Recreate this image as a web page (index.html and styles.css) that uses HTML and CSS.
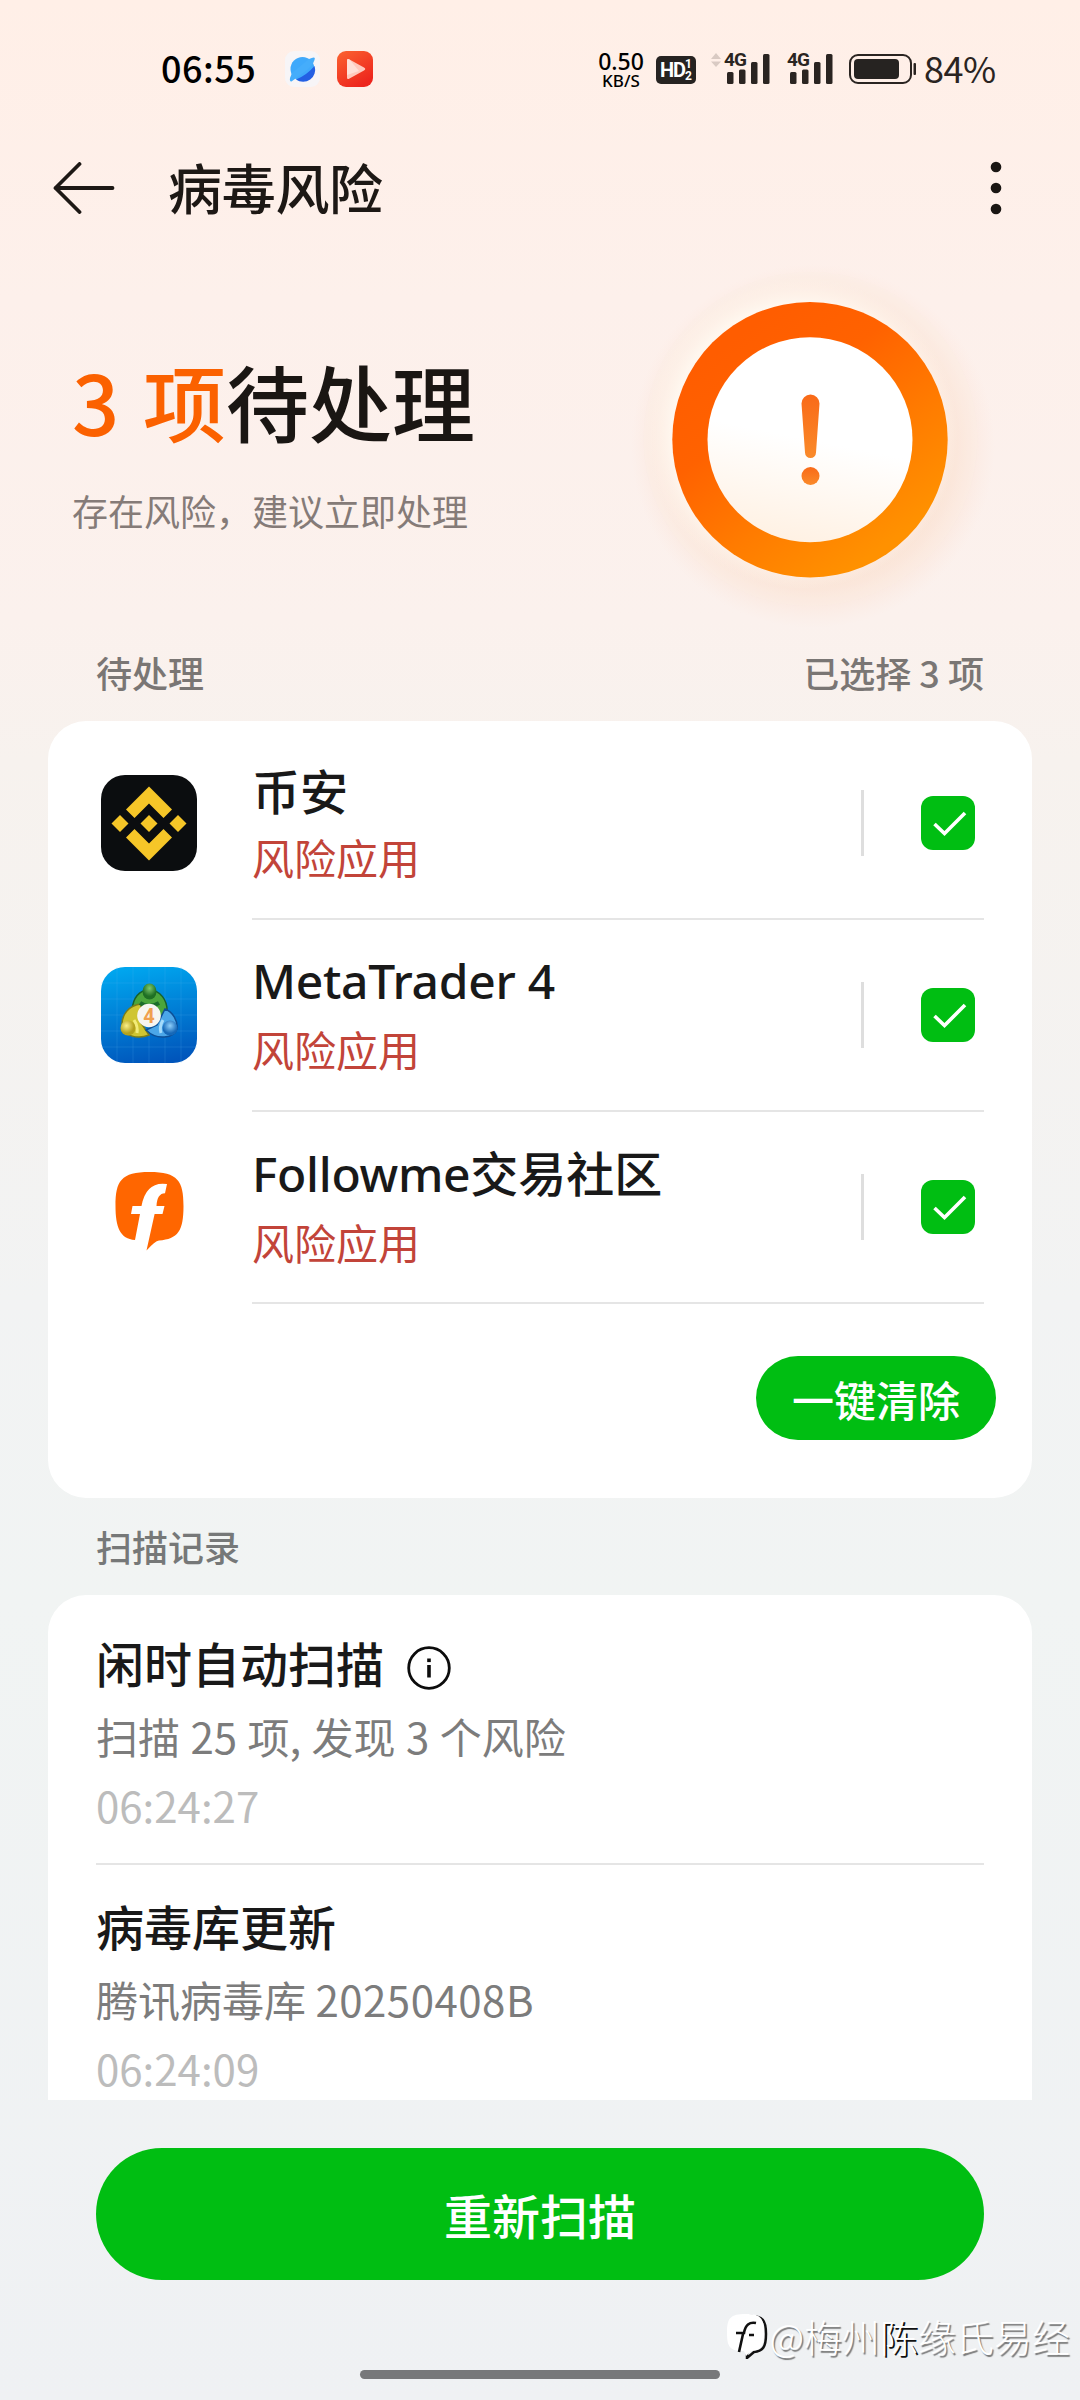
FILE: index.html
```html
<!DOCTYPE html>
<html lang="zh-CN">
<head>
  <meta charset="UTF-8">
  <meta name="viewport" content="width=device-width, initial-scale=1.0">
  <title>病毒风险</title>
  <link rel="stylesheet" href="styles.css">
</head>
<body>

  <div class="screen">

    <!-- 状态栏 -->
    <div class="status-bar">
      <span class="clock">06:55</span>
      <svg class="tray-icon tray-browser" viewBox="0 0 36 36">
        <rect width="35" height="36" rx="9" fill="#f7f5f7"/>
        <circle cx="17.500" cy="18" r="12" fill="#3fa9fb"/>
        <path d="M29.500 15A12 12 0 0 1 11 28.500Q22 24 29.500 15z" fill="#2360e4"/>
        <path d="M24 8Q29 5.500 29.800 7Q30 9 27 14L22 19L6.500 30.500Q4.500 31 5 27L7 22z" fill="#45adfb"/>
      </svg>
      <svg class="tray-icon tray-video" viewBox="0 0 36 36">
        <defs>
          <linearGradient id="videoBg" x1="0" y1="0" x2=".6" y2="1">
            <stop offset="0" stop-color="#fb6330"/>
            <stop offset="1" stop-color="#ed251d"/>
          </linearGradient>
        </defs>
        <rect width="36" height="36" rx="9" fill="url(#videoBg)"/>
        <path d="M10 9.500Q10 7 12.500 8.500L27 16.500Q29.500 18 27 19.500L12.500 27.500Q10 29 10 26.500z" fill="#ffc9bd"/>
        <path d="M10 9.500Q10 7 12.500 8.500L22 20L10 24z" fill="#ffe0d8"/>
      </svg>

      <div class="net-speed">
        <span class="speed-value">0.50</span>
        <span class="speed-unit">KB/S</span>
      </div>
      <div class="hd-badge">
        <span class="hd-text">HD</span>
        <span class="hd-sim"><i>1</i><i>2</i></span>
      </div>
      <svg class="updown" viewBox="0 0 10 14">
        <path d="M5 0L10 6H0z M5 14L10 8.500H0z" fill="#d9cac3"/>
      </svg>
      <div class="signal">
        <span class="signal-type">4G</span>
        <svg class="signal-bars" viewBox="0 0 43 30">
          <rect x="0" y="18" width="6.500" height="12" rx="1.500"/>
          <rect x="12" y="15.500" width="6.500" height="14.500" rx="1.500"/>
          <rect x="24" y="8" width="6.500" height="22" rx="1.500"/>
          <rect x="36" y="0" width="6.500" height="30" rx="1.500"/>
        </svg>
      </div>
      <div class="signal signal-second">
        <span class="signal-type">4G</span>
        <svg class="signal-bars" viewBox="0 0 43 30">
          <rect x="0" y="18" width="6.500" height="12" rx="1.500"/>
          <rect x="12" y="15.500" width="6.500" height="14.500" rx="1.500"/>
          <rect x="24" y="8" width="6.500" height="22" rx="1.500"/>
          <rect x="36" y="0" width="6.500" height="30" rx="1.500"/>
        </svg>
      </div>
      <svg class="battery" viewBox="0 0 68 30">
        <rect x="1" y="1" width="61" height="28" rx="8" fill="none" stroke="#2a2421" stroke-width="2"/>
        <rect x="5" y="5" width="45" height="20" rx="4" fill="#262321"/>
        <rect x="64.500" y="9" width="2.500" height="12" rx="1" fill="#2a2421"/>
      </svg>
      <span class="battery-text">84%</span>
    </div>

    <!-- 标题栏 -->
    <header class="title-bar">
      <svg class="back" viewBox="0 0 62 52">
        <path d="M26.500 2L2.500 26L26.500 50M2.500 26H59.500" fill="none" stroke="#1d1815" stroke-width="3.800" stroke-linecap="round" stroke-linejoin="round"/>
      </svg>
      <h1>病毒风险</h1>
      <svg class="more" viewBox="0 0 12 54">
        <circle cx="6" cy="6" r="5.300"/>
        <circle cx="6" cy="27" r="5.300"/>
        <circle cx="6" cy="48" r="5.300"/>
      </svg>
    </header>

    <!-- 风险概览 -->
    <section class="hero">
      <div class="hero-text">
        <h2><em>3 项</em>待处理</h2>
        <p>存在风险，建议立即处理</p>
      </div>
      <svg class="hero-badge" viewBox="0 0 400 400">
        <defs>
          <radialGradient id="halo">
            <stop offset=".6" stop-color="#f9c9a9" stop-opacity=".55"/>
            <stop offset=".78" stop-color="#fad0b8" stop-opacity=".4"/>
            <stop offset="1" stop-color="#fddccb" stop-opacity="0"/>
          </radialGradient>
          <radialGradient id="glow">
            <stop offset=".84" stop-color="#fff8f0" stop-opacity=".9"/>
            <stop offset="1" stop-color="#fff4ec" stop-opacity="0"/>
          </radialGradient>
          <linearGradient id="ring" x1=".2" y1=".15" x2=".75" y2=".9">
            <stop offset="0" stop-color="#ff5d00"/>
            <stop offset=".3" stop-color="#ff6200"/>
            <stop offset=".65" stop-color="#ff7b00"/>
            <stop offset="1" stop-color="#ff9100"/>
          </linearGradient>
          <linearGradient id="face" x1=".6" y1="0" x2=".4" y2="1">
            <stop offset=".5" stop-color="#ffffff"/>
            <stop offset="1" stop-color="#fff1e3"/>
          </linearGradient>
          <linearGradient id="mark" x1="0" y1="0" x2="0" y2="1">
            <stop offset="0" stop-color="#f96a18"/>
            <stop offset="1" stop-color="#fa8a2a"/>
          </linearGradient>
        </defs>
        <circle cx="193" cy="206" r="182" fill="url(#halo)"/>
        <circle cx="190.500" cy="199" r="167" fill="#fdeee4" fill-opacity=".25"/>
        <circle cx="182" cy="193" r="156" fill="url(#glow)"/>
        <circle cx="190" cy="199.700" r="137.700" fill="url(#ring)"/>
        <circle cx="190" cy="199.700" r="102.500" fill="url(#face)"/>
        <g fill="url(#mark)">
          <path d="M181.500 163.500a9 9 0 0 1 18 0L196 212.500a5.500 5.500 0 0 1-11 0z"/>
          <circle cx="190.500" cy="236" r="9"/>
        </g>
      </svg>
    </section>

    <!-- 待处理列表 -->
    <div class="section-head pending-head">
      <span>待处理</span>
      <span>已选择 3 项</span>
    </div>
    <section class="card pending">
      <div class="app">
        <svg class="app-icon" viewBox="0 0 96 96">
          <rect width="96" height="96" rx="24" fill="#0b0d0f"/>
          <g fill="#f6c628">
            <path d="M48 11.500L71 34.500L62.500 43L48 28.500L33.500 43L25 34.500z"/>
            <path d="M48 85.500L71 62.500L62.500 54L48 68.500L33.500 54L25 62.500z"/>
            <path d="M48 40L56.500 48.500L48 57L39.500 48.500z"/>
            <path d="M19 40L27.500 48.500L19 57L10.500 48.500z"/>
            <path d="M77 40L85.500 48.500L77 57L68.500 48.500z"/>
          </g>
        </svg>
        <div class="app-body">
          <div class="app-text">
            <div class="app-name">币安</div>
            <div class="app-risk">风险应用</div>
          </div>
          <span class="sep"></span>
          <svg class="check" viewBox="0 0 54 54">
            <rect width="54" height="54" rx="12" fill="#00be12"/>
            <path d="M13.500 28L23.500 37.500L44 17" fill="none" stroke="#fff" stroke-width="3.600"/>
          </svg>
        </div>
      </div>

      <div class="app">
        <svg class="app-icon" viewBox="0 0 96 96">
          <defs>
            <linearGradient id="mtBg" x1=".4" y1="0" x2=".6" y2="1">
              <stop offset="0" stop-color="#00a5ee"/>
              <stop offset="1" stop-color="#0055bb"/>
            </linearGradient>
            <linearGradient id="mtGreen" x1="0" y1="0" x2="0" y2="1">
              <stop offset="0" stop-color="#2f8a2c"/>
              <stop offset="1" stop-color="#5fb84a"/>
            </linearGradient>
            <radialGradient id="ballGreen" cx=".5" cy=".3">
              <stop offset="0" stop-color="#7fc96d"/>
              <stop offset="1" stop-color="#1f7024"/>
            </radialGradient>
            <radialGradient id="ballYellow" cx=".4" cy=".35">
              <stop offset="0" stop-color="#fbf08a"/>
              <stop offset="1" stop-color="#b3a11c"/>
            </radialGradient>
            <radialGradient id="ballBlue" cx=".5" cy=".35">
              <stop offset="0" stop-color="#8fd0fb"/>
              <stop offset="1" stop-color="#1668b8"/>
            </radialGradient>
          </defs>
          <rect width="96" height="96" rx="24" fill="url(#mtBg)"/>
          <path d="M16 0V96M32 0V96M48 0V96M64 0V96M80 0V96M0 16H96M0 32H96M0 48H96M0 64H96M0 80H96" stroke="#5cc0f5" stroke-opacity=".22" stroke-width=".8"/>
          <path d="M31 43C32 31 38 23 48 23C59 23 67 33 66 46L61 56L35 50z" fill="#4ba63c" stroke="#17602c" stroke-width="1.500"/>
          <path d="M40 37C28 38 20 48 21 60C22 68 36 73 48 68L40 56z" fill="#cfc532" stroke="#7c7d18" stroke-width="1.500"/>
          <path d="M64 42C72 45 77 54 76 62C73 71 56 74 45 63L56 58z" fill="#4ba6e8" stroke="#0d4f96" stroke-width="1.500"/>
          <path d="M39 36Q48 42 58 36" fill="none" stroke="#1b6d2b" stroke-width="4"/>
          <path d="M33 53Q37 59 36 66" fill="none" stroke="#f2eb79" stroke-width="3"/>
          <path d="M62 53Q58 60 60 66" fill="none" stroke="#a5dbfb" stroke-width="3"/>
          <ellipse cx="48.500" cy="24.500" rx="7" ry="8" fill="url(#ballGreen)"/>
          <circle cx="27" cy="61" r="7.500" fill="url(#ballYellow)"/>
          <circle cx="69" cy="61" r="7.500" fill="url(#ballBlue)"/>
          <circle cx="48" cy="48.500" r="11.800" fill="#f7f5f0"/>
          <text class="mt-digit" x="48" y="55.500" text-anchor="middle">4</text>
        </svg>
        <div class="app-body">
          <div class="app-text">
            <div class="app-name name-mt">MetaTrader 4</div>
            <div class="app-risk">风险应用</div>
          </div>
          <span class="sep"></span>
          <svg class="check" viewBox="0 0 54 54">
            <rect width="54" height="54" rx="12" fill="#00be12"/>
            <path d="M13.500 28L23.500 37.500L44 17" fill="none" stroke="#fff" stroke-width="3.600"/>
          </svg>
        </div>
      </div>

      <div class="app">
        <svg class="app-icon" viewBox="0 0 96 96">
          <path d="M34 81C19 80 14.500 68 14.500 47C14.500 22 20 13 48.500 13C77 13 82.500 22 82.500 47C82.500 72 77 80 58 81.500Q54 82 45.500 91.500L53.600 55H61.500L63.500 47H55.500Q56 34.500 64 34.300L66 25Q45 22 40.500 47H31.500L30 55H39z" fill="#ff6600"/>
        </svg>
        <div class="app-body">
          <div class="app-text">
            <div class="app-name"><span class="name-fm">Followme</span>交易社区</div>
            <div class="app-risk">风险应用</div>
          </div>
          <span class="sep"></span>
          <svg class="check" viewBox="0 0 54 54">
            <rect width="54" height="54" rx="12" fill="#00be12"/>
            <path d="M13.500 28L23.500 37.500L44 17" fill="none" stroke="#fff" stroke-width="3.600"/>
          </svg>
        </div>
      </div>

      <div class="card-actions">
        <button class="btn-clear">一键清除</button>
      </div>
    </section>

    <!-- 扫描记录 -->
    <div class="section-head record-head">
      <span>扫描记录</span>
    </div>
    <section class="card records">
      <div class="record">
        <div class="record-title">闲时自动扫描
          <svg class="info" viewBox="0 0 44 44">
            <circle cx="22" cy="22" r="20.300" fill="none" stroke="#0c0c0c" stroke-width="2.800"/>
            <path d="M22 19V31.500" stroke="#0c0c0c" stroke-width="3.600"/>
            <rect x="20.200" y="12.500" width="3.600" height="3.600" fill="#0c0c0c"/>
          </svg>
        </div>
        <div class="record-desc desc-scan">扫描 25 项, 发现 3 个风险</div>
        <div class="record-time">06:24:27</div>
      </div>
      <div class="record">
        <div class="record-title">病毒库更新</div>
        <div class="record-desc">腾讯病毒库 <span class="db-version">20250408B</span></div>
        <div class="record-time">06:24:09</div>
      </div>
    </section>

    <!-- 底部按钮 -->
    <footer class="bottom">
      <button class="btn-rescan">重新扫描</button>
      <div class="home-bar"></div>
    </footer>

    <div class="watermark">
      <svg class="wm-logo" viewBox="0 0 42 46">
        <path d="M23 3C37 3 40 7 40 21C40 34 37 38 28 39L21 45V37" fill="none" stroke="#111" stroke-width="2.500"/>
        <path d="M20 1C4 1 1 5 1 20C1 34 4 38 18 38L20 43L25 38C35 37 38 34 38 20C38 5 35 1 20 1z" fill="#fff"/>
        <path d="M30 10Q20 8 18 20H10M17 21L13 39M23 22H28" fill="none" stroke="#111" stroke-width="2.600"/>
      </svg>
      <span>@梅州<b>陈</b>缘氏易经</span>
    </div>

  </div>

</body>
</html>
```
FILE: styles.css
```css
* {
  box-sizing: border-box;
}

body {
  margin: 0;
  font-family: "Noto Sans CJK SC", sans-serif;
  color: #191919;
}

h1, h2, p {
  margin: 0;
}

svg {
  display: block;
  flex: none;
}

button {
  border: none;
  padding: 0;
  font-family: inherit;
  font-weight: 500;
  color: #fff;
  background: #00be12;
}

.screen {
  position: relative;
  width: 1080px;
  height: 2400px;
  overflow: hidden;
  display: flex;
  flex-direction: column;
  background: linear-gradient(180deg, #ffefe7 0, #fdf0eb 300px, #fbf1ed 620px, #f7f2ee 760px, #f2f3f3 1300px, #f1f4f3 1600px, #eff1f3 2400px);
}

/* 状态栏 */
.status-bar {
  height: 138px;
  padding: 50px 84px 0 161px;
  display: flex;
  align-items: flex-start;
}

.clock {
  width: 125px;
  font-size: 36px;
  line-height: 35px;
  font-weight: 500;
  letter-spacing: 0.5px;
  color: #000;
  white-space: nowrap;
}

.tray-icon {
  width: 36px;
  height: 36px;
  margin-top: 1px;
}

.tray-browser {
  margin-left: -1px;
}

.tray-video {
  margin-left: 16px;
}

.net-speed {
  width: 54px;
  height: 40px;
  margin-left: auto;
  display: flex;
  flex-direction: column;
  align-items: center;
  font-family: "Noto Sans", sans-serif;
  font-weight: 500;
  color: #000;
}

.speed-value {
  font-size: 23px;
  line-height: 22px;
}

.speed-unit {
  font-size: 17px;
  line-height: 17px;
}

.hd-badge {
  width: 40px;
  height: 28px;
  margin: 6px 0 0 8px;
  border-radius: 5px;
  display: flex;
  justify-content: center;
  align-items: center;
  background: #262321;
  color: #fff;
  font-family: Roboto, sans-serif;
  font-weight: 700;
}

.hd-text {
  font-size: 20px;
  letter-spacing: -1px;
}

.hd-sim {
  display: flex;
  flex-direction: column;
}

.hd-sim i {
  font-style: normal;
  font-size: 12px;
  line-height: 12px;
}

.updown {
  width: 10px;
  height: 14px;
  margin: 3px 3px 0 15px;
}

.signal {
  position: relative;
  width: 46px;
  height: 34px;
  padding: 4px 0 0 3px;
}

.signal-second {
  margin-left: 17px;
}

.signal-bars {
  width: 43px;
  height: 30px;
  fill: #2a2421;
}

.signal-type {
  position: absolute;
  left: 0;
  top: 1px;
  font-family: Roboto, sans-serif;
  font-size: 19px;
  line-height: 17px;
  font-weight: 700;
  letter-spacing: -1px;
  color: #2a2421;
}

.battery {
  width: 68px;
  height: 30px;
  margin: 4px 7px 0 16px;
}

.battery-text {
  width: 72px;
  font-size: 36px;
  line-height: 35px;
  letter-spacing: -0.5px;
  color: #2a2421;
  white-space: nowrap;
}

/* 标题栏 */
.title-bar {
  height: 100px;
  padding: 0 78px 0 53px;
  display: flex;
  align-items: center;
}

.back {
  width: 62px;
  height: 52px;
}

.title-bar h1 {
  flex: 1;
  margin-left: 53px;
  padding-bottom: 3px;
  font-size: 54px;
  line-height: 96px;
  font-weight: 500;
  letter-spacing: -0.3px;
  color: #1d1815;
}

.more {
  width: 12px;
  height: 54px;
  fill: #1a1613;
}

/* 风险概览 */
.hero {
  height: 402px;
  padding: 0 60px 0 72px;
  display: flex;
  justify-content: space-between;
}

.hero-text {
  padding-top: 107px;
}

.hero h2 {
  font-size: 83px;
  line-height: 110px;
  font-weight: 500;
  word-spacing: 5px;
  color: #1a1613;
}

.hero em {
  font-style: normal;
  color: #fb6100;
}

.hero p {
  margin-top: 30px;
  font-size: 36px;
  line-height: 50px;
  color: #857b78;
}

.hero-badge {
  width: 400px;
  height: 400px;
  margin: 2px 0 0;
}

/* 分组标题 */
.section-head {
  padding: 0 96px;
  display: flex;
  justify-content: space-between;
  font-size: 36px;
  line-height: 50px;
  font-weight: 500;
  color: #7a7674;
}

.pending-head {
  height: 81px;
  padding-top: 7px;
}

.record-head {
  height: 97px;
  padding-top: 23px;
  color: #767878;
}

.card {
  margin: 0 48px;
  border-radius: 38px;
  background: #fff;
}

/* 待处理列表 */
.pending {
  height: 777px;
  padding-top: 7px;
}

.app {
  height: 192px;
  padding: 0 48px 0 53px;
  display: flex;
  align-items: center;
}

.app-icon {
  width: 96px;
  height: 96px;
  margin-bottom: 2px;
}

.mt-digit {
  font-family: Roboto, sans-serif;
  font-size: 20px;
  font-weight: 700;
  fill: #f0a04e;
}

.app-body {
  flex: 1;
  height: 192px;
  margin-left: 55px;
  padding-right: 9px;
  display: flex;
  align-items: center;
  border-bottom: 2px solid #e5e5e5;
}

.app-text {
  flex: 1;
  padding-bottom: 5px;
}

.app-name {
  font-size: 48px;
  line-height: 64px;
  font-weight: 500;
  white-space: nowrap;
}

.name-mt,
.name-fm {
  font-family: "Noto Sans", "Noto Sans CJK SC", sans-serif;
  letter-spacing: -0.3px;
}

.app-risk {
  margin-top: 8px;
  font-size: 42px;
  line-height: 56px;
  color: #c24439;
}

.sep {
  width: 3px;
  height: 66px;
  background: #dedede;
}

.check {
  width: 54px;
  height: 54px;
  margin-left: 57px;
}

.card-actions {
  padding: 52px 36px 0;
  display: flex;
  justify-content: flex-end;
}

.btn-clear {
  width: 240px;
  height: 84px;
  border-radius: 42px;
  font-size: 42px;
  line-height: 79px;
}

/* 扫描记录 */
.records {
  height: 505px;
  padding: 0 48px;
  border-radius: 38px 38px 0 0;
  overflow: hidden;
}

.record {
  height: 270px;
  padding-top: 35px;
  border-bottom: 2px solid #e5e5e5;
}

.record + .record {
  padding-top: 28px;
  border-bottom: none;
}

.record-title {
  display: flex;
  align-items: center;
  font-size: 48px;
  line-height: 64px;
  font-weight: 500;
}

.info {
  width: 44px;
  height: 44px;
  margin: 12px 0 0 23px;
}

.record-desc {
  margin-top: 12px;
  font-size: 42px;
  line-height: 60px;
  color: #7c7c7c;
}

.desc-scan {
  word-spacing: 1px;
}

.db-version {
  letter-spacing: 0.5px;
}

.record-time {
  margin-top: 10px;
  font-size: 42px;
  line-height: 58px;
  color: #bcbcbc;
}

/* 底部 */
.bottom {
  padding-top: 48px;
  display: flex;
  flex-direction: column;
  align-items: center;
}

.btn-rescan {
  width: 888px;
  height: 132px;
  border-radius: 66px;
  font-size: 48px;
  line-height: 126px;
}

.home-bar {
  width: 360px;
  height: 9px;
  margin-top: 90px;
  border-radius: 5px;
  background: #77787a;
}

/* 水印 */
.watermark {
  position: absolute;
  right: 10px;
  bottom: 36px;
  display: flex;
  align-items: center;
  color: #fff;
  font-size: 38px;
  line-height: 56px;
  font-weight: 300;
  text-shadow: 1.5px 1.5px 1px #777;
}

.watermark b {
  font-weight: 300;
  text-shadow: 2px 2px 0 #111;
}

.wm-logo {
  width: 42px;
  height: 46px;
  margin-right: 1px;
}
```
